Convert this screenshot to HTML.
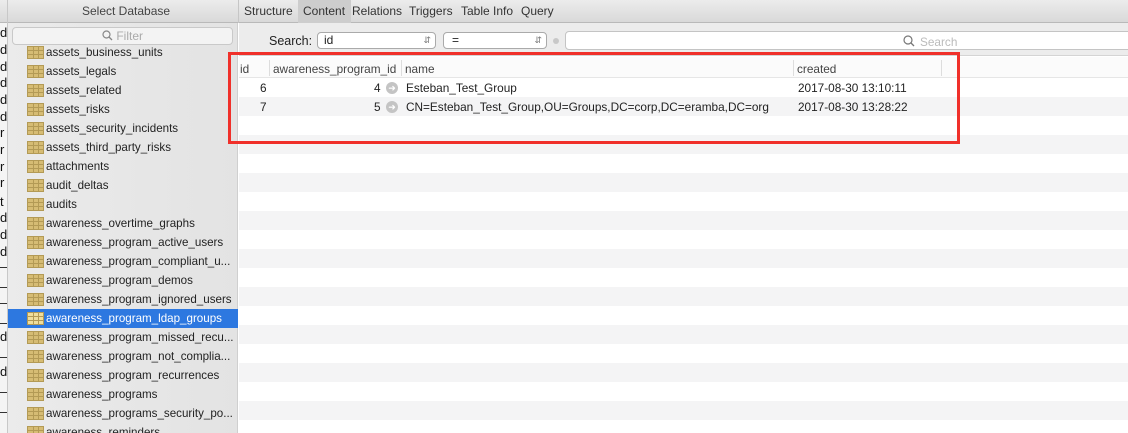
<!DOCTYPE html><html><head><style>
*{margin:0;padding:0;box-sizing:border-box}
body{width:1128px;height:433px;overflow:hidden;background:#fff;font-family:"Liberation Sans",sans-serif;font-size:12px;color:#222;position:relative}
.abs{position:absolute}
#top{left:0;top:0;width:1128px;height:23px;background:linear-gradient(#ececec,#d9d9d9);border-bottom:1px solid #b9b9b9}
#strip{left:0;top:23px;width:8px;height:410px;background:#f4f4f4;border-right:1px solid #c8c8c8;overflow:hidden}
#strip span{position:absolute;left:0;font-size:13px;line-height:13px;color:#111}
#strip i{position:absolute;left:0;width:7px;height:1px;background:#333}
#side{left:8px;top:23px;width:230px;height:410px;background:linear-gradient(90deg,#ebebeb,#e3e3e3);border-right:1px solid #cfcfcf}
.row{position:absolute;left:0;width:230px;height:19px;line-height:19px;padding-left:38px;font-size:11.6px;color:#222;white-space:nowrap;overflow:hidden}
.row.sel{background:#2d78e0;color:#fff}
.ic{position:absolute;left:19px;top:3px;width:17px;height:13px;background:#d6bc74;border:1px solid #b39a55;
background-image:linear-gradient(90deg,transparent 5px,#b39a55 5px,#b39a55 6px,transparent 6px,transparent 10px,#b39a55 10px,#b39a55 11px,transparent 11px),linear-gradient(transparent 3px,#b39a55 3px,#b39a55 4px,transparent 4px,transparent 7px,#b39a55 7px,#b39a55 8px,transparent 8px)}
.sel .ic{background-color:#f0de9c}
.tab{position:absolute;top:0;height:23px;line-height:23px;font-size:12px;color:#333}
.stripe{position:absolute;left:239px;width:889px;height:19px;background:#f4f4f5}
.cell{position:absolute;font-size:11.8px;white-space:nowrap}
</style></head><body>
<div id="top" class="abs">
<div class="abs" style="left:0;top:0;width:8px;height:23px;border-right:1px solid #c8c8c8"></div>
<div class="tab" style="left:82px;color:#444">Select Database</div>
<div class="abs" style="left:238px;top:0;width:1px;height:23px;background:#c6c6c6"></div>
<div class="abs" style="left:298px;top:0;width:53px;height:23px;background:#cdcdcd"></div>
<div class="tab" style="left:244px">Structure</div>
<div class="tab" style="left:303px">Content</div>
<div class="tab" style="left:352px">Relations</div>
<div class="tab" style="left:409px">Triggers</div>
<div class="tab" style="left:461px">Table Info</div>
<div class="tab" style="left:521px">Query</div>
</div>
<div id="strip" class="abs">
<span style="top:3px">d</span><span style="top:20px">d</span><span style="top:37px">d</span><span style="top:53px">d</span><span style="top:70px">d</span><span style="top:87px">d</span><span style="top:103px">r</span><span style="top:120px">r</span><span style="top:137px">r</span><span style="top:153px">r</span><span style="top:172px">t</span><span style="top:188px">d</span><span style="top:205px">d</span><span style="top:222px">d</span>
<i style="top:244px"></i><i style="top:264px"></i><i style="top:280px"></i><i style="top:300px"></i><span style="top:307px">d</span><i style="top:334px"></i><span style="top:342px">d</span><i style="top:369px"></i><i style="top:389px"></i>
</div>
<div id="side" class="abs">
<div class="abs" style="left:4px;top:4px;width:221px;height:18px;background:#f3f3f3;border:1px solid #c9c9c9;border-radius:4px;color:#aaa;font-size:12px;line-height:16px;text-align:center">
<svg width="11" height="11" viewBox="0 0 11 11" style="vertical-align:-1px"><circle cx="4.5" cy="4.5" r="3.5" fill="none" stroke="#888" stroke-width="1.2"/><path d="M7 7l3 3" stroke="#888" stroke-width="1.3"/></svg> Filter</div>
</div>
<div class="abs" style="left:8px;top:21px;width:230px;height:412px;overflow:hidden">
<div class="row" style="top:22px"><b class="ic"></b>assets_business_units</div>
<div class="row" style="top:41px"><b class="ic"></b>assets_legals</div>
<div class="row" style="top:60px"><b class="ic"></b>assets_related</div>
<div class="row" style="top:79px"><b class="ic"></b>assets_risks</div>
<div class="row" style="top:98px"><b class="ic"></b>assets_security_incidents</div>
<div class="row" style="top:117px"><b class="ic"></b>assets_third_party_risks</div>
<div class="row" style="top:136px"><b class="ic"></b>attachments</div>
<div class="row" style="top:155px"><b class="ic"></b>audit_deltas</div>
<div class="row" style="top:174px"><b class="ic"></b>audits</div>
<div class="row" style="top:193px"><b class="ic"></b>awareness_overtime_graphs</div>
<div class="row" style="top:212px"><b class="ic"></b>awareness_program_active_users</div>
<div class="row" style="top:231px"><b class="ic"></b>awareness_program_compliant_u...</div>
<div class="row" style="top:250px"><b class="ic"></b>awareness_program_demos</div>
<div class="row" style="top:269px"><b class="ic"></b>awareness_program_ignored_users</div>
<div class="row sel" style="top:288px"><b class="ic"></b>awareness_program_ldap_groups</div>
<div class="row" style="top:307px"><b class="ic"></b>awareness_program_missed_recu...</div>
<div class="row" style="top:326px"><b class="ic"></b>awareness_program_not_complia...</div>
<div class="row" style="top:345px"><b class="ic"></b>awareness_program_recurrences</div>
<div class="row" style="top:364px"><b class="ic"></b>awareness_programs</div>
<div class="row" style="top:383px"><b class="ic"></b>awareness_programs_security_po...</div>
<div class="row" style="top:402px"><b class="ic"></b>awareness_reminders</div>
</div>
<div class="abs" style="left:239px;top:23px;width:889px;height:33px;background:#ececec;border-bottom:1px solid #d4d4d4"></div>
<div class="cell" style="left:269px;top:34px;font-size:12.5px">Search:</div>
<div class="abs" style="left:317px;top:32px;width:119px;height:17px;background:#fff;border:1px solid #aaa;border-radius:4px;padding-left:6px;line-height:15px">id<span style="position:absolute;right:4px;top:0;color:#777;font-size:9px">&#8693;</span></div>
<div class="abs" style="left:443px;top:32px;width:104px;height:17px;background:#fff;border:1px solid #aaa;border-radius:4px;padding-left:8px;line-height:15px">=<span style="position:absolute;right:4px;top:0;color:#777;font-size:9px">&#8693;</span></div>
<div class="abs" style="left:553px;top:38px;width:6px;height:6px;border-radius:3px;background:#c8c8c8"></div>
<div class="abs" style="left:565px;top:31px;width:570px;height:19px;background:#fff;border:1px solid #c4c4c4;border-radius:4px"></div>
<svg class="abs" style="left:903px;top:35px" width="12" height="12" viewBox="0 0 12 12"><circle cx="5" cy="5" r="4" fill="none" stroke="#777" stroke-width="1.2"/><path d="M8 8l3 3" stroke="#777" stroke-width="1.3"/></svg>
<div class="cell" style="left:920px;top:35px;color:#bbb">Search</div>
<div class="abs" style="left:239px;top:57px;width:889px;height:21px;background:#fbfbfb;border-bottom:1px solid #e6e6e6"></div>
<div class="abs" style="left:269px;top:60px;width:1px;height:16px;background:#ddd"></div>
<div class="abs" style="left:401px;top:60px;width:1px;height:16px;background:#ddd"></div>
<div class="abs" style="left:793px;top:60px;width:1px;height:16px;background:#ddd"></div>
<div class="abs" style="left:941px;top:60px;width:1px;height:16px;background:#ddd"></div>
<div class="cell" style="left:240px;top:62px;color:#444">id</div>
<div class="cell" style="left:273px;top:62px;color:#444">awareness_program_id</div>
<div class="cell" style="left:405px;top:62px;color:#444">name</div>
<div class="cell" style="left:797px;top:62px;color:#444">created</div>
<div class="stripe" style="top:97px"></div>
<div class="stripe" style="top:135px"></div>
<div class="stripe" style="top:173px"></div>
<div class="stripe" style="top:211px"></div>
<div class="stripe" style="top:249px"></div>
<div class="stripe" style="top:287px"></div>
<div class="stripe" style="top:325px"></div>
<div class="stripe" style="top:363px"></div>
<div class="stripe" style="top:401px"></div>
<div class="cell" style="left:260px;top:81px">6</div>
<div class="cell" style="left:374px;top:81px">4</div>
<div class="abs" style="left:386px;top:82px;width:12px;height:12px;border-radius:6px;background:#c4c4c4;color:#fff;font-size:9px;line-height:12px;text-align:center">&#10140;</div>
<div class="cell" style="left:406px;top:81px">Esteban_Test_Group</div>
<div class="cell" style="left:798px;top:81px">2017-08-30 13:10:11</div>
<div class="cell" style="left:260px;top:100px">7</div>
<div class="cell" style="left:374px;top:100px">5</div>
<div class="abs" style="left:386px;top:101px;width:12px;height:12px;border-radius:6px;background:#c4c4c4;color:#fff;font-size:9px;line-height:12px;text-align:center">&#10140;</div>
<div class="cell" style="left:406px;top:100px">CN=Esteban_Test_Group,OU=Groups,DC=corp,DC=eramba,DC=org</div>
<div class="cell" style="left:798px;top:100px">2017-08-30 13:28:22</div>
<div class="abs" style="left:228px;top:52px;width:732px;height:92px;border:3px solid #f0302a"></div>
</body></html>
